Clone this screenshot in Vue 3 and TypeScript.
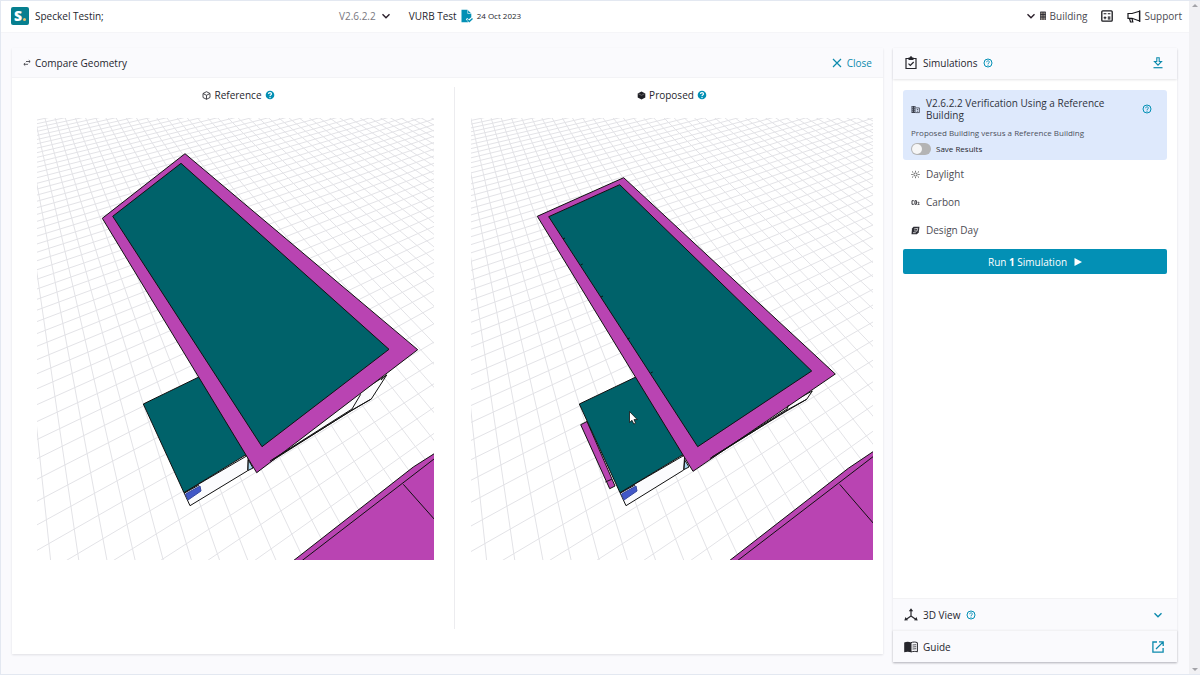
<script setup lang="ts">
import { ref } from 'vue'

interface Shape {
  kind: string
  points: string
}
interface Scene {
  id: string
  title: string
  solid: boolean
  viewBox: string
  shift: number
  shapes: Shape[]
  lines: string[]
}

const HORIZON = -132
const BASE = 561
const VP_STEEP = -22
const VP_SHALLOW = 1232

/** Perspective ground grid: two line families, each running to its own vanishing point. */
function gridPath(shift: number): string {
  const parts: string[] = []
  for (let i = -1; i < 75; i++) {
    parts.push(`M${(50.7 + i * 28.2 + shift).toFixed(1)} ${BASE}L${VP_STEEP + shift} ${HORIZON}`)
  }
  for (let j = -62; j < 12; j++) {
    parts.push(`M${(65.5 + j * 47.1 + shift).toFixed(1)} ${BASE}L${VP_SHALLOW + shift} ${HORIZON}`)
  }
  return parts.join('')
}

const scenes: Scene[] = [
  {
    id: 'reference',
    title: 'Reference',
    solid: false,
    viewBox: '37 118 397 442',
    shift: 0,
    shapes: [
      { kind: 'wall', points: '386.7,375 371.3,399 352,410 270,462 300,430' },
      { kind: 'wall', points: '184,492.7 190,505.7 247.7,470.7 248.3,455' },
      { kind: 'glass', points: '248.3,460 253,468 248,470.5' },
      { kind: 'pane', points: '185.5,494 200,486 201,491 188,500' },
      { kind: 'roof', points: '143.3,404 204,374.5 260,455 245,455.3 184,492.7' },
      { kind: 'shade', points: '185,153.7 102.3,218.3 256.7,472.7 417.7,349.7' },
      { kind: 'roof', points: '181,163.3 112.7,216.3 262,446.7 389,349.3' },
      { kind: 'shade', points: '293,561 413.3,467 440,450 440,561' },
    ],
    lines: [
      'M360.7 394.3L352 409L270 461',
      'M371.3 399L350 411.5L272 460',
      'M386.7 375L381 380',
      'M301.5 561L434 459',
      'M403.3 484.3L435 520',
      'M184.5 493L199 485',
    ],
  },
  {
    id: 'proposed',
    title: 'Proposed',
    solid: true,
    viewBox: '471 118 402 442',
    shift: 436,
    shapes: [
      { kind: 'wall', points: '812.3,391 806.7,399.3 788.3,409.3 710,459 740,430' },
      { kind: 'wall', points: '620,492.7 626,505.7 683.7,470 684.7,455' },
      { kind: 'glass', points: '684.7,460 689,467 684,469.5' },
      { kind: 'pane', points: '621.5,494 636,486 637,491 624,500' },
      { kind: 'shade', points: '580.7,424.7 587,421.5 615,486 609.7,488.7' },
      { kind: 'roof', points: '579.3,404 640,375 698,455 682,455.3 620,492.7' },
      { kind: 'shade', points: '623.7,177.7 537.3,216.3 693,471.3 835.3,374' },
      { kind: 'roof', points: '619.7,184.7 548.7,216.7 697.7,446.7 811.7,371' },
      { kind: 'shade', points: '729,561 848.3,468.3 880,447 880,561' },
    ],
    lines: [
      'M788.5 405L787 409L710 458.5',
      'M806.7 399.3L785 412L712 457',
      'M737 561L873 456.7',
      'M839.7 484.3L874 524',
      'M605.3 482L611.7 479.3',
      'M620.5 493L635 485',
      'M563 239l2 -1M580.7 265l2 -1M601 297l2 -1M627.7 339l2 -1M650.7 373l2 -1',
    ],
  },
]

const others = [
  { id: 'daylight', label: 'Daylight' },
  { id: 'carbon', label: 'Carbon' },
  { id: 'design', label: 'Design Day' },
]
const saveResults = ref(false)
</script>

<template>
  <svg class="defs" aria-hidden="true">
    <symbol id="help-line" viewBox="0 0 10 10">
      <circle cx="5" cy="5" r="4" fill="none" stroke="currentColor" stroke-width="1" />
      <path d="M3.600 4.200C3.600 2.400 6.500 2.400 6.400 4.100C6.300 5 5 4.900 5 6" fill="none" stroke="currentColor" stroke-width=".9" />
      <circle cx="5" cy="7.200" r=".6" fill="currentColor" />
    </symbol>
    <symbol id="help-fill" viewBox="0 0 10 10">
      <circle cx="5" cy="5" r="4.300" fill="currentColor" />
      <path d="M3.500 4.100C3.500 2.100 6.500 2.200 6.500 4C6.400 5 5 4.900 5 6" fill="none" stroke="#fff" stroke-width="1.200" />
      <circle cx="5" cy="7.500" r=".7" fill="#fff" />
    </symbol>
    <symbol id="chevron" viewBox="0 0 10 10">
      <path d="M1.500 3.200L5 6.700L8.500 3.200" fill="none" stroke="currentColor" stroke-width="1.400" />
    </symbol>
  </svg>

  <div class="window">
    <div class="page">
      <header class="topbar">
        <a class="brand" href="#">
          <span class="logo"><b>S</b><i></i></span>
          <span class="brand-name">Speckel Testin;</span>
        </a>
        <div class="project">
          <button class="version" type="button">
            V2.6.2.2
            <svg class="ico10"><use href="#chevron" /></svg>
          </button>
          <span class="project-name">VURB Test</span>
          <svg class="doc" viewBox="0 0 12 14">
            <path d="M.5 .7H6.500L10.300 4.500V8.300L7.800 10.200L6.200 8.900L4.800 10.300L7.300 13.200H.5Z" fill="#0390b5" />
            <path d="M6.700 .7V4.500H10.500" fill="none" stroke="#fff" stroke-width=".6" />
            <path d="M6.300 10.600L8.300 12.500L11.500 9.500" fill="none" stroke="#0390b5" stroke-width="1.400" />
          </svg>
          <time class="date">24 Oct 2023</time>
        </div>
        <nav class="tools">
          <button class="tool" type="button">
            <svg class="ico10 dark"><use href="#chevron" /></svg>
            <svg class="tower" viewBox="0 0 8 10">
              <path d="M1.500 1H6.500V9H1.500Z" fill="#a39a90" />
              <path d="M1.700 1V9M4 1V9M6.300 1V9M1.300 3.500H6.700M1.300 6H6.700M1.300 1H6.700" stroke="#2b2b33" stroke-width=".9" />
            </svg>
            Building
          </button>
          <button class="tool calc" type="button" aria-label="Calculator">
            <svg viewBox="0 0 12 12">
              <rect x=".8" y=".8" width="10.400" height="10.400" rx="1" fill="none" stroke="#17171c" stroke-width="1.300" />
              <path d="M2.600 3.800H5.400M6.800 3.800H9.400M2.600 7.800H5.400M4 6.400V9.200M6.800 7.100H9.400M6.800 8.900H9.400" stroke="#17171c" stroke-width="1.100" />
            </svg>
          </button>
          <button class="tool support" type="button">
            <svg viewBox="0 0 14 13">
              <path d="M1 3.500H5L12.500 1.200V11L5 8.300H1Z" fill="none" stroke="#17171c" stroke-width="1.200" />
              <path d="M2.500 8.500L3.500 12H5.800L5 8.500M12.700 .5V12" fill="none" stroke="#17171c" stroke-width="1.200" />
            </svg>
            Support
          </button>
        </nav>
      </header>

      <main class="content">
        <section class="card compare">
          <div class="card-head compare-head">
            <svg class="swap" viewBox="0 0 8 8">
              <path d="M3 2.500H7M5.800 1.200L7.200 2.500L5.800 3.800M5 5.300H1M2.200 4L.8 5.300L2.200 6.600" fill="none" stroke="#33333a" stroke-width=".8" />
            </svg>
            <h1>Compare Geometry</h1>
            <button class="close" type="button">
              <svg viewBox="0 0 10 10"><path d="M1 1L9 9M9 1L1 9" stroke="currentColor" stroke-width="1.200" /></svg>
              Close
            </button>
          </div>
          <div class="views">
            <figure v-for="s in scenes" :key="s.id" class="view" :class="s.id">
              <figcaption>
                <svg class="cube" viewBox="0 0 9 9">
                  <path v-if="!s.solid" d="M4.500 .7L8 2.500V6.500L4.500 8.300L1 6.500V2.500ZM1 2.500L4.500 4.300L8 2.500M4.500 4.300V8.300" fill="none" stroke="#33333a" stroke-width=".9" />
                  <template v-else>
                    <path d="M4.500 .5L8.300 2.400V6.600L4.500 8.600L.7 6.600V2.400Z" fill="#1e1e24" />
                    <path d="M1.300 2.700L4.500 4.300L7.700 2.700" fill="none" stroke="#aaa" stroke-width=".5" />
                  </template>
                </svg>
                {{ s.title }}
                <svg class="help"><use href="#help-fill" /></svg>
              </figcaption>
              <svg class="scene" :viewBox="s.viewBox" role="img" :aria-label="s.title + ' building model'">
                <path class="grid" :d="gridPath(s.shift)" />
                <polygon v-for="(p, i) in s.shapes" :key="i" :class="p.kind" :points="p.points" />
                <path v-for="(l, i) in s.lines" :key="'l' + i" class="edge" :d="l" />
                <path
                  v-if="s.solid"
                  d="M629.500 411.500V422.500L632 420.300L633.800 424L635.600 423.200L634 419.600H637.300Z"
                  fill="#fff"
                  stroke="#111"
                  stroke-width=".8"
                />
              </svg>
            </figure>
          </div>
        </section>

        <aside class="card side">
          <div class="card-head side-head">
            <svg class="clip" viewBox="0 0 12 14">
              <path d="M1 2.500H11V12.500H1Z" fill="none" stroke="#26262c" stroke-width="1.200" />
              <path d="M3.500 1.500H8.500V4H3.500Z" fill="#26262c" />
              <circle cx="6" cy="1.500" r="1.200" fill="#26262c" />
              <path d="M3.500 7.700L5.300 9.500L8.700 6" fill="none" stroke="#26262c" stroke-width="1.200" />
            </svg>
            <h2>Simulations</h2>
            <svg class="help"><use href="#help-line" /></svg>
            <button class="end" type="button" aria-label="Download">
              <svg class="down" viewBox="0 0 10 12">
                <path d="M3.800 .8H6.200V4.500H8.500L5 8.200L1.500 4.500H3.800Z" fill="none" stroke="currentColor" stroke-width="1.100" />
                <path d="M.5 10.700H9.500" stroke="currentColor" stroke-width="1.200" />
              </svg>
            </button>
          </div>

          <div class="side-body">
            <div class="selected">
              <div class="sel-top">
                <svg class="mini" viewBox="0 0 9 9">
                  <path d="M.5 1H4.500V8H.5Z" fill="#3a3f4c" />
                  <path d="M1.300 2.200H2M3 2.200H3.700M1.300 4.200H2M3 4.200H3.700M1.300 6.200H2M3 6.200H3.700" stroke="#dee9fc" stroke-width=".9" />
                  <path d="M4.500 2.900H8.400V7.600H4.500M5.800 4.500H7.200M5.800 6.200H7.200" fill="none" stroke="#3a3f4c" stroke-width=".8" />
                </svg>
                <h3>V2.6.2.2 Verification Using a Reference Building</h3>
                <svg class="help"><use href="#help-line" /></svg>
              </div>
              <p>Proposed Building versus a Reference Building</p>
              <label class="switch">
                <input v-model="saveResults" type="checkbox" />
                <span>Save Results</span>
              </label>
            </div>

            <button v-for="o in others" :key="o.id" class="option" type="button">
              <svg class="mini" viewBox="0 0 9 9">
                <g v-if="o.id === 'daylight'" fill="none" stroke="#444" stroke-width=".8">
                  <circle cx="4.500" cy="4.500" r="1.600" />
                  <path d="M4.500 .8V1.900M4.500 7.100V8.200M.3 4.500H1.800M7.200 4.500H8.700M1 1.500L2.300 2.600M6.700 6.400L8 7.500M8 1.500L6.700 2.600M1 7.500L2.300 6.400" />
                </g>
                <g v-else-if="o.id === 'carbon'" fill="none" stroke="#3a3a40" stroke-width="1">
                  <path d="M2.800 2.700H1V6.300H2.800M3.900 2.700H5.400V6.300H3.900Z" />
                  <path d="M6.400 4.300H8V5.300L6.700 6.500H8.500" stroke-width=".8" />
                </g>
                <g v-else>
                  <path d="M2.500 .8H8.500L7.700 6.500L5.800 8.300H.5L1 2.500Z" fill="#2e2e35" />
                  <path d="M3 3L6.700 2.300L6 5.200L3.200 4.800M2 6.700H4.800" fill="none" stroke="#fff" stroke-width=".7" />
                </g>
              </svg>
              {{ o.label }}
            </button>

            <button class="run" type="button">
              <span>Run <b>1</b> Simulation</span>
              <svg viewBox="0 0 8 8"><path d="M.5 0L8 4L.5 8Z" fill="#fff" /></svg>
            </button>
          </div>

          <button class="foot" type="button">
            <svg class="lead" viewBox="0 0 14 14">
              <path d="M7 8V2M7 8L2 11.500M7 8L12 11.500" fill="none" stroke="#26262c" stroke-width="1.200" />
              <path d="M7 .3L9.200 3.300H4.800ZM.3 12.500L1.500 9L4 12.300ZM13.700 12.500L12.500 9L10 12.300Z" fill="#26262c" />
            </svg>
            <span>3D View</span>
            <svg class="help"><use href="#help-line" /></svg>
            <svg class="end ico10"><use href="#chevron" /></svg>
          </button>
          <a class="foot guide" href="#">
            <svg class="lead" viewBox="0 0 14 12">
              <path d="M.2 1.500C2.500 .5 5 .5 7 1.500V11.300C5 10.500 2.500 10.500 .2 11.300Z" fill="#26262c" />
              <path d="M7 1.700C9 .8 11.500 .8 13.400 1.700V10.800C11.500 10.200 9 10.200 7 11Z" fill="none" stroke="#26262c" stroke-width="1" />
              <path d="M8.500 4L12.200 3.700M8.500 6L12.200 5.700M8.500 8L12.200 7.700" stroke="#26262c" stroke-width=".8" />
            </svg>
            <span>Guide</span>
            <svg class="end open" viewBox="0 0 12 12">
              <path d="M5 1H.9V11.100H11.100V7M7 .9H11.200V5M11 1.100L4 8" fill="none" stroke="currentColor" stroke-width="1.300" />
            </svg>
          </a>
        </aside>
      </main>
    </div>
    <div class="scroll" aria-hidden="true">
      <i class="up"></i>
      <i class="dn"></i>
    </div>
  </div>
</template>

<style>
body {
  margin: 0;
}
</style>

<style scoped>
* {
  box-sizing: border-box;
}
.defs {
  position: absolute;
  width: 0;
  height: 0;
}
.window {
  display: flex;
  min-height: 100vh;
  border: solid #e3e8f1;
  border-width: 1px 0 1px 1px;
  background: #fafafd;
  color: #26262d;
  font: 10px/16px 'Open Sans', 'Noto Sans', sans-serif;
}
.page {
  flex: 1;
  display: flex;
  flex-direction: column;
  min-width: 0;
}
svg {
  display: block;
  flex: none;
}
button {
  border: 0;
  padding: 0;
  background: none;
  font: inherit;
  color: inherit;
  cursor: pointer;
}
a {
  color: inherit;
  text-decoration: none;
}
h1,
h2,
h3,
p,
figure {
  margin: 0;
}
h1,
h2 {
  font-size: 10px;
  font-weight: 500;
  line-height: 16px;
}
.ico10,
.help {
  width: 10px;
  height: 10px;
}
.help {
  color: #0390b5;
}
.topbar {
  display: grid;
  grid-template-columns: 328px 1fr auto;
  align-items: center;
  height: 32px;
  padding: 0 7px 1px 10px;
  background: #fff;
  border-bottom: 1px solid #f5f5f8;
}
.brand {
  display: flex;
  align-items: center;
  gap: 6px;
}
.logo {
  display: flex;
  align-items: center;
  justify-content: center;
  gap: 1px;
  width: 18px;
  height: 18px;
  border-radius: 2px;
  background: #067f8f;
  color: #fff;
  font-size: 14px;
  line-height: 18px;
}
.logo b {
  font-weight: 800;
}
.logo i {
  width: 3px;
  height: 3px;
  margin-top: 7px;
  border-radius: 2px;
  background: #e6c36c;
}
.brand-name {
  white-space: nowrap;
  font-weight: 500;
}
.project,
.tools,
.tool,
.version {
  display: flex;
  align-items: center;
}
.version {
  gap: 5px;
  color: #777780;
}
.version svg,
.dark {
  color: #2a1e2a;
}
.project-name {
  margin: 0 4px 0 18px;
}
.doc {
  width: 12px;
  height: 14px;
}
.date {
  margin-left: 4px;
  font-size: 8px;
}
.tools {
  gap: 14px;
  color: #4a4a52;
}
.tool {
  gap: 3px;
}
.tower {
  width: 8px;
  height: 10px;
}
.calc svg {
  width: 12px;
  height: 12px;
}
.support svg {
  width: 14px;
  height: 13px;
}
.content {
  flex: 1;
  display: grid;
  grid-template-columns: 1fr 284px;
  gap: 10px;
  padding: 15px 12px 12px 11px;
}
.card {
  display: flex;
  flex-direction: column;
  background: #fff;
  box-shadow: 0 1px 2px rgba(40, 40, 60, 0.12);
}
.compare {
  margin-bottom: 8px;
}
.card-head {
  display: flex;
  align-items: center;
  height: 30px;
  background: #fafafd;
  border-bottom: 1px solid #f3f3f6;
}
.compare-head {
  padding: 0 11px;
  gap: 4px;
}
.swap {
  width: 8px;
  height: 8px;
}
.close {
  display: flex;
  align-items: center;
  gap: 5px;
  margin-left: auto;
  color: #0c8aad;
  font-weight: 500;
}
.close svg {
  width: 10px;
  height: 10px;
}
.views {
  flex: 1;
  display: grid;
  grid-template-columns: 443fr 428fr;
  padding: 9px 0 25px;
}
.view {
  padding: 0 10px 0 16px;
}
.reference {
  padding: 0 20px 0 25px;
  border-right: 1px solid #ececef;
}
figcaption {
  display: flex;
  align-items: center;
  justify-content: center;
  gap: 3px;
  height: 16px;
  margin-bottom: 15px;
  font-weight: 500;
}
.reference figcaption {
  padding-left: 6px;
}
.cube {
  width: 9px;
  height: 9px;
}
.scene {
  width: 100%;
  height: auto;
}
.grid {
  fill: none;
  stroke: #e3e3e7;
  stroke-width: 1;
}
polygon,
.edge {
  stroke: #111;
  stroke-width: 1;
}
.edge {
  fill: none;
}
.wall {
  fill: #fbfbfd;
}
.glass {
  fill: #a9d6ef;
}
.pane {
  fill: #4258c8;
  stroke: #35479f;
}
.roof {
  fill: #00626a;
}
.shade {
  fill: #b944b2;
}
.side-head {
  height: 31px;
  padding: 0 14px 2px 12px;
  border-bottom: 0;
  box-shadow: 0 1px 2px rgba(40, 40, 60, 0.12);
}
.clip {
  width: 12px;
  height: 14px;
  margin-right: 6px;
}
.side-head .help,
.foot .help {
  margin-left: 6px;
}
.end {
  margin-left: auto;
  color: #0c8aad;
}
.down {
  width: 10px;
  height: 12px;
}
.side-body {
  flex: 1;
  display: flex;
  flex-direction: column;
  padding: 11px 10px 10px;
}
.selected {
  padding: 7px 8px 5px;
  border-radius: 3px;
  background: #dee9fc;
}
.sel-top {
  display: flex;
  align-items: center;
  padding-right: 7px;
}
.mini {
  width: 9px;
  height: 9px;
  margin-right: 6px;
}
h3 {
  flex: 1;
  padding-right: 24px;
  font-size: 10px;
  font-weight: 500;
  line-height: 12px;
  color: #2f333c;
}
.selected p {
  margin-top: 6px;
  font-size: 8px;
  line-height: 11px;
  color: #4c515c;
}
.switch {
  display: flex;
  align-items: center;
  gap: 5px;
  height: 12px;
  margin-top: 5px;
  font-size: 8px;
}
.switch input {
  appearance: none;
  display: flex;
  align-items: center;
  width: 20px;
  height: 12px;
  margin: 0;
  padding: 1px;
  border-radius: 6px;
  background: #b4b4b4;
}
.switch input::before {
  content: '';
  width: 10px;
  height: 10px;
  border-radius: 50%;
  background: #f6f6f6;
}
.switch input:checked {
  justify-content: flex-end;
  background: #0390b5;
}
.option {
  display: flex;
  align-items: center;
  height: 28px;
  padding: 0 8px;
  text-align: left;
  color: #4c4c54;
}
.run {
  display: flex;
  align-items: center;
  justify-content: center;
  gap: 7px;
  height: 25px;
  margin-top: 5px;
  border-radius: 2px;
  background: #0390b5;
  color: #fff;
}
.run svg {
  width: 8px;
  height: 8px;
}
.foot {
  display: flex;
  align-items: center;
  height: 32px;
  padding: 0 14px 0 11px;
  border-top: 1px solid #f2f2f4;
  background: #fafafd;
  font-weight: 500;
  text-align: left;
}
.guide {
  padding-right: 13px;
  box-shadow: 0 1px 2px rgba(40, 40, 60, 0.25);
}
.lead {
  width: 14px;
  height: 14px;
  margin-right: 5px;
}
.open {
  width: 12px;
  height: 12px;
}
.scroll {
  display: flex;
  flex-direction: column;
  justify-content: space-between;
  align-items: center;
  width: 11px;
  padding: 3px 0;
  background: #f1f1f4;
}
.scroll i {
  border: 3px solid transparent;
}
.scroll .up {
  border-top-width: 0;
  border-bottom-color: #a3a3a8;
}
.scroll .dn {
  border-bottom-width: 0;
  border-top-color: #a3a3a8;
}
</style>
